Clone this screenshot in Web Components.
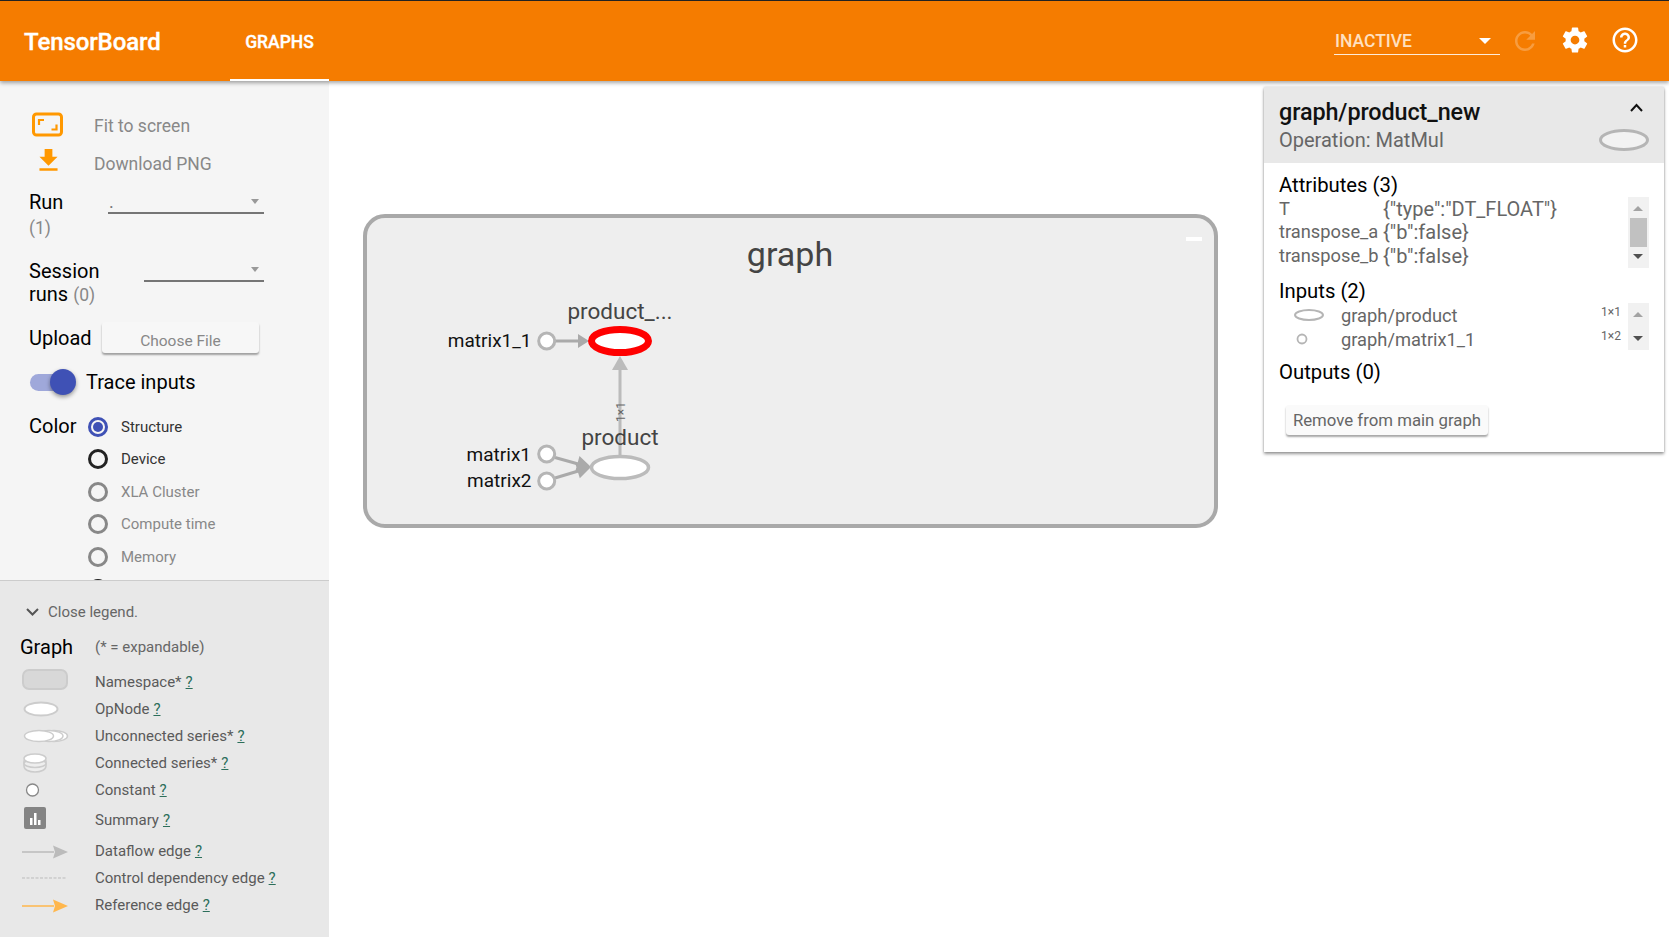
<!DOCTYPE html>
<html><head><meta charset="utf-8">
<style>
html,body{margin:0;padding:0;height:100%;overflow:hidden;background:#fff;font-family:Roboto,"Liberation Sans",sans-serif}
</style></head>
<body>
<tb-app></tb-app>
<script>
function def(name, html, proto){
  const t=document.createElement('template');t.innerHTML=html;
  customElements.define(name,class extends HTMLElement{
    constructor(){super();this.attachShadow({mode:'open'}).appendChild(t.content.cloneNode(true));}
    connectedCallback(){ if(proto) proto.call(this,this.shadowRoot); }
  });
}
const G="M19.43 12.98c.04-.32.07-.64.07-.98s-.03-.66-.07-.98l2.11-1.65c.19-.15.24-.42.12-.64l-2-3.46c-.12-.22-.39-.3-.61-.22l-2.49 1c-.52-.4-1.08-.73-1.69-.98l-.38-2.65C14.46 2.18 14.25 2 14 2h-4c-.25 0-.46.18-.49.42l-.38 2.65c-.61.25-1.17.59-1.69.98l-2.49-1c-.23-.09-.49 0-.61.22l-2 3.46c-.13.22-.07.49.12.64l2.11 1.65c-.04.32-.07.65-.07.98s.03.66.07.98l-2.11 1.65c-.19.15-.24.42-.12.64l2 3.46c.12.22.39.3.61.22l2.49-1c.52.4 1.08.73 1.69.98l.38 2.65c.03.24.24.42.49.42h4c.25 0 .46-.18.49-.42l.38-2.65c.61-.25 1.17-.59 1.69-.98l2.49 1c.23.09.49 0 .61-.22l2-3.46c.12-.22.07-.49-.12-.64l-2.01-1.65zM12 15.5c-1.93 0-3.5-1.57-3.5-3.5s1.57-3.5 3.5-3.5 3.5 1.57 3.5 3.5-1.57 3.5-3.5 3.5z";
const H="M11 18h2v-2h-2v2zm1-16C6.48 2 2 6.48 2 12s4.48 10 10 10 10-4.48 10-10S17.52 2 12 2zm0 18c-4.41 0-8-3.59-8-8s3.59-8 8-8 8 3.59 8 8-3.59 8-8 8zm0-14c-2.21 0-4 1.79-4 4h2c0-1.1.9-2 2-2s2 .9 2 2c0 2-3 1.75-3 5h2c0-2.25 3-2.5 3-5 0-2.21-1.79-4-4-4z";
const R="M17.65 6.35C16.2 4.9 14.21 4 12 4c-4.42 0-7.99 3.58-7.99 8s3.57 8 7.99 8c3.73 0 6.84-2.55 7.73-6h-2.08c-.82 2.33-3.04 4-5.65 4-3.31 0-6-2.69-6-6s2.69-6 6-6c1.66 0 3.14.69 4.22 1.78L13 11h7V4l-2.35 2.35z";

def('tb-header',`<style>
:host{display:flex;align-items:stretch;height:81px;box-sizing:border-box;border-top:1px solid #222;background:#f57c00;color:#fff;box-shadow:0 2px 4px rgba(0,0,0,.35);position:relative;z-index:3;padding-left:24px}
.brand{font-size:24px;font-weight:500;line-height:82px;width:206px;letter-spacing:-.1px;height:80px;-webkit-text-stroke:.35px #fff}
.tab{width:99px;box-sizing:border-box;text-align:center;font-size:17.500px;font-weight:500;line-height:82px;border-bottom:2px solid #fff;height:80px;overflow:hidden;-webkit-text-stroke:.35px #fff}
.sp{flex:1}
.right{display:flex;align-items:center;height:78px}
.sel{width:166px;height:30px;box-sizing:border-box;border-bottom:1px solid rgba(255,255,255,.85);display:flex;justify-content:space-between;align-items:center;padding:4px 9px 0 1px;font-size:17.500px;font-weight:500;color:#ffe0c0;margin-top:-1px}
.sel i{width:0;height:0;border-left:6px solid transparent;border-right:6px solid transparent;border-top:6px solid #fff}
svg{width:30px;height:30px;fill:#fff;display:block}
.r{margin-left:10px;opacity:.25;margin-top:2px}.g{margin-left:20px}.h{margin-left:20px;margin-right:29px}
</style>
<div class="brand">TensorBoard</div><div class="tab">GRAPHS</div><div class="sp"></div>
<div class="right"><div class="sel"><span>INACTIVE</span><i></i></div>
<svg class="r" viewBox="0 0 24 24"><path d="${R}"/></svg>
<svg class="g" viewBox="0 0 24 24"><path d="${G}"/></svg>
<svg class="h" viewBox="0 0 24 24"><path d="${H}"/></svg></div>`);

def('tb-action',`<style>
:host{display:flex;align-items:center;height:38px;font-size:17.500px;color:#888}
.i{width:62px;flex:none;display:flex}
</style><div class="i"><slot name="icon"></slot></div><slot></slot>`);

def('tb-select',`<style>
:host{display:block;position:relative;box-sizing:border-box;border-bottom:2px solid #757575;font-size:18px;color:#777}
i{position:absolute;right:5px;top:var(--at,11px);width:0;height:0;border-left:4.500px solid transparent;border-right:4.500px solid transparent;border-top:5px solid #999}
span{position:absolute;left:1px;top:2px;line-height:24px}
</style><span><slot></slot></span><i></i>`);

def('tb-toggle',`<style>
:host{display:flex;align-items:center;height:28px;font-size:20px;color:#000}
.w{position:relative;width:42px;height:17px;background:#9fa8da;border-radius:9px;margin:0 14px 0 1px;flex:none}
.w b{position:absolute;right:-4px;top:-4.500px;width:26px;height:26px;border-radius:50%;background:#3f51b5;box-shadow:0 2px 4px rgba(0,0,0,.4)}
</style><div class="w"><b></b></div><slot></slot>`);

def('tb-radio',`<style>
:host{display:flex;align-items:center;height:32.500px;font-size:15px;color:var(--c,#888)}
.o{width:20px;height:20px;border-radius:50%;box-sizing:border-box;border:3px solid var(--r,#888);margin-right:13px;margin-left:-1px;position:relative;flex:none}
:host([checked]) .o::after{content:"";position:absolute;left:2px;top:2px;width:10px;height:10px;border-radius:50%;background:#3f51b5}
</style><div class="o"></div><slot></slot>`);

def('tb-controls',`<style>
:host{display:block;flex:1;min-height:0;overflow:hidden;padding:26px 0 0 29px;background:#f5f5f5;box-sizing:border-box;font-size:20px;color:#000}
.act{margin-left:3px;display:block}
.fit{width:32px;height:26px;display:block;margin-top:-3px}
.dl{width:31px;height:31px;fill:#ff9800;margin-left:1px;display:block;margin-top:-7px}
.g{color:#888;font-size:17.500px}
.runrow{display:flex;height:28px;line-height:28px;margin-top:5px}
.l2{height:28px;line-height:28px;margin-top:-2px}
.sessrow{display:flex;margin-top:18px;line-height:23px}
.sessl{width:115px}
.up{display:flex;margin-top:15px;align-items:center;height:31px}
.up span{width:73px}
.cf{width:157px;height:31px;box-sizing:border-box;background:#f7f7f7;border-radius:3px;box-shadow:0 2px 2px rgba(0,0,0,.35);font-size:15.500px;color:#888;text-align:center;line-height:38px;overflow:hidden}
.tr{margin-top:15px}
.color{display:flex;margin-top:21px}
.color>span{width:60px;line-height:30px;margin-top:-6px}
.rads{margin-top:-6.500px}
</style>
<div class="act">
<tb-action><svg slot="icon" class="fit" viewBox="0 0 32 26"><rect x="1.500" y="2" width="28" height="21" rx="3" fill="none" stroke="#ff9800" stroke-width="3"/><path d="M12 8H7v5M19.500 17.500h5v-5" fill="none" stroke="#ff9800" stroke-width="2.200"/></svg>Fit to screen</tb-action>
<tb-action><svg slot="icon" class="dl" viewBox="0 0 24 24"><path d="M19 9h-4V3H9v6H5l7 7 7-7zM5 18v2h14v-2H5z"/></svg>Download PNG</tb-action>
</div>
<div class="runrow"><div style="width:79px">Run</div><tb-select style="width:156px;height:26px">.</tb-select></div>
<div class="l2 g">(1)</div>
<div class="sessrow"><div class="sessl">Session<br>runs <span class="g">(0)</span></div><tb-select style="width:120px;height:22px;--at:7px"></tb-select></div>
<div class="up"><span>Upload</span><div class="cf">Choose File</div></div>
<tb-toggle class="tr">Trace inputs</tb-toggle>
<div class="color"><span>Color</span><div class="rads">
<tb-radio checked style="--r:#3f51b5;--c:#333">Structure</tb-radio>
<tb-radio style="--r:#222;--c:#333">Device</tb-radio>
<tb-radio>XLA Cluster</tb-radio>
<tb-radio>Compute time</tb-radio>
<tb-radio>Memory</tb-radio>
<tb-radio style="--r:#222"></tb-radio>
</div></div>`);

def('tb-legend-row',`<style>
:host{display:flex;align-items:center;height:var(--h,27px);font-size:15px;color:#5a5a5a}
.i{width:75px;display:flex;flex:none}
u{color:#2c6e5a;margin-left:4px;text-decoration-thickness:1px}
</style><div class="i"><slot name="icon"></slot></div><slot></slot><u>?</u>`);

def('tb-legend',`<style>
:host{display:block;height:357px;box-sizing:border-box;background:#e8e8e8;border-top:1px solid #ccc;padding:0 0 0 20px;flex:none;color:#666;font-size:15px}
.c{display:flex;align-items:center;height:20px;margin:21px 0 0 5px}
.c svg{width:15px;height:10px;margin-right:8px}
.h{display:flex;align-items:center;height:28px;margin-top:11px;margin-bottom:7px}
.h b{font-weight:400;font-size:20px;color:#000;width:75px}
svg{display:block}
</style>
<div class="c"><svg viewBox="0 0 15 10"><path d="M2 2l5.500 5.500L13 2" fill="none" stroke="#555" stroke-width="2"/></svg>Close legend.</div>
<div class="h"><b>Graph</b><span>(* = expandable)</span></div>
<tb-legend-row><svg slot="icon" width="50" height="22" style="margin-top:-4px"><rect x="3" y="1" width="44" height="19" rx="6" fill="#d8d8d8" stroke="#ccc" stroke-width="2"/></svg>Namespace*</tb-legend-row>
<tb-legend-row><svg slot="icon" width="50" height="18"><ellipse cx="21" cy="9" rx="16.500" ry="6.500" fill="#fff" stroke="#ccc" stroke-width="2"/></svg>OpNode</tb-legend-row>
<tb-legend-row><svg slot="icon" width="50" height="16"><ellipse cx="34" cy="8" rx="13.500" ry="5.500" fill="#fff" stroke="#ccc" stroke-width="1.500"/><ellipse cx="29" cy="8" rx="14" ry="5.500" fill="#fff" stroke="#ccc" stroke-width="1.500"/><ellipse cx="19" cy="8" rx="14.500" ry="5.500" fill="#fff" stroke="#ccc" stroke-width="1.500"/></svg>Unconnected series*</tb-legend-row>
<tb-legend-row><svg slot="icon" width="50" height="22"><path d="M4 14c0 8 22 8 22 0v-5H4z" fill="#eee" stroke="#ccc" stroke-width="1.500"/><ellipse cx="15" cy="11.500" rx="11" ry="4" fill="#eee" stroke="#ccc" stroke-width="1.500"/><ellipse cx="15" cy="6.500" rx="11" ry="4.500" fill="#fff" stroke="#ccc" stroke-width="1.500"/></svg>Connected series*</tb-legend-row>
<tb-legend-row><svg slot="icon" width="50" height="16"><circle cx="12.500" cy="8" r="6" fill="#fff" stroke="#888" stroke-width="1.300"/></svg>Constant</tb-legend-row>
<tb-legend-row style="--h:34px"><svg slot="icon" width="50" height="24" style="margin-top:-5px"><rect x="4" y="1" width="22" height="22" rx="2" fill="#848484"/><path d="M10 12h2.500v7H10zM14 7h2.500v12H14zM18 14h2.500v5H18z" fill="#fff"/></svg>Summary</tb-legend-row>
<tb-legend-row><svg slot="icon" width="50" height="14" style="margin-top:2px"><path d="M2 7h32" stroke="#bbb" stroke-width="1.500"/><path d="M48 7L33 .5l2 6.500-2 6.500z" fill="#bbb"/></svg>Dataflow edge</tb-legend-row>
<tb-legend-row><svg slot="icon" width="50" height="6"><path d="M2 3h45" stroke="#bbb" stroke-width="1" stroke-dasharray="3 1.500"/></svg>Control dependency edge</tb-legend-row>
<tb-legend-row><svg slot="icon" width="50" height="14" style="margin-top:2px"><path d="M2 7h32" stroke="#ffb74d" stroke-width="1.500"/><path d="M48 7L33 .5l2 6.500-2 6.500z" fill="#ffb74d"/></svg>Reference edge</tb-legend-row>`);

def('tb-sidebar',`<style>
:host{display:flex;flex-direction:column;width:329px;flex:none;min-height:0;position:relative;z-index:1}
</style><tb-controls></tb-controls><tb-legend></tb-legend>`);

def('tb-graph',`<style>
:host{display:block;position:absolute;left:0;top:0;width:100%;height:100%}
svg{display:block;width:100%;height:100%;font-family:Roboto,"Liberation Sans",sans-serif}
text{fill:#333}
.lab{fill:#111;font-size:19px;text-anchor:end}
.t{fill:#444;font-size:22.500px;text-anchor:middle}
</style>
<svg viewBox="329 81 1340 856">
<rect x="365" y="216" width="851" height="310" rx="20" fill="#eee" stroke="#a9a9a9" stroke-width="4"/>
<rect x="1186" y="237" width="16" height="4" fill="#fff" />
<text x="790" y="266" style="fill:#444;font-size:34px;text-anchor:middle">graph</text>
<path d="M620 455V368" stroke="#bbb" stroke-width="3" fill="none"/>
<path d="M620 356l-8 14h16z" fill="#bbb"/>
<text transform="translate(624.500,412) rotate(-90)" style="fill:#666;font-size:12px;text-anchor:middle">1×1</text>
<path d="M555 341h26" stroke="#aaa" stroke-width="3"/><path d="M589 341l-11-7v14z" fill="#aaa"/>
<path d="M555 457.500l25 7M555 478l25-7.500" stroke="#aaa" stroke-width="3"/>
<path d="M591 467L575.500 470.400 579.500 456zM591 467L579.800 478.200 575.400 463.800z" fill="#aaa"/>
<circle cx="546.700" cy="341" r="8" fill="#fff" stroke="#b5b5b5" stroke-width="3"/>
<circle cx="546.700" cy="454" r="8" fill="#fff" stroke="#b5b5b5" stroke-width="3"/>
<circle cx="546.700" cy="481" r="8" fill="#fff" stroke="#b5b5b5" stroke-width="3"/>
<ellipse cx="620" cy="341" rx="28.500" ry="11.500" fill="#fff" stroke="#f00" stroke-width="7"/>
<ellipse cx="620" cy="467.500" rx="28.500" ry="11" fill="#fff" stroke="#bbb" stroke-width="3.500"/>
<text class="t" x="620" y="319">product_...</text>
<text class="t" x="620" y="445">product</text>
<text class="lab" x="531.500" y="347">matrix1_1</text>
<text class="lab" x="531" y="461">matrix1</text>
<text class="lab" x="531.500" y="487">matrix2</text>
</svg>`);

def('tb-scroll',`<style>
:host{display:block;position:relative;width:21px;background:#f1f1f1;flex:none}
i{position:absolute;left:5px;width:0;height:0;border-left:5px solid transparent;border-right:5px solid transparent}
.u{top:9px;border-bottom:5px solid #a3a3a3}.d{bottom:9px;border-top:5px solid #505050}
b{position:absolute;left:2px;right:2px;top:var(--t,21px);height:var(--n,0);background:#c1c1c1}
</style><i class="u"></i><b></b><i class="d"></i>`);

def('tb-info-card',`<style>
:host{display:block;position:absolute;top:6px;right:5px;width:400px;height:365px;background:#fff;box-shadow:0 2px 3px rgba(0,0,0,.4),0 0 2px rgba(0,0,0,.15);box-sizing:border-box;color:#666;z-index:2}
.hd{height:76px;background:#e8e8e8;position:relative;padding:13px 0 0 15px;box-sizing:border-box}
.title{font-size:23.400px;line-height:24px;color:#111;font-weight:500;letter-spacing:-.1px}
.op{font-size:20px;line-height:26px;color:#666;margin-top:3px}
.chev{position:absolute;right:21px;top:16px;width:13px;height:9px}
.oval{position:absolute;right:15px;top:41px;width:50px;height:24px}
.bd{padding:10px 15px 0 15px;font-size:20px}
h4{margin:0;font-weight:400;font-size:20.300px;color:#000;line-height:24px}
.tbl{display:flex;justify-content:space-between;height:71px;margin-top:0}
.attr{display:grid;grid-template-columns:104px auto;grid-auto-rows:23.400px;line-height:24px;font-size:20px;align-content:start}
.k{font-size:18.300px}
.ins{display:flex;height:47px;margin-top:0;justify-content:space-between}
.rows{flex:1;display:grid;grid-template-columns:62px 1fr auto;grid-auto-rows:24px;line-height:24px;font-size:18.300px;margin-top:1px;margin-right:5px}
.rows svg{display:block;margin-top:4px}
.sz{font-size:12px;line-height:16px;color:#666;margin-right:2px}
.btn{width:202px;height:30px;background:#fafafa;border-radius:3px;box-shadow:0 2px 2px rgba(0,0,0,.35);margin:21px 0 0 7px;text-align:center;line-height:30px;font-size:16.800px;color:#666}
</style>
<div class="hd"><div class="title">graph/product_new</div><div class="op">Operation: MatMul</div>
<svg class="chev" viewBox="0 0 13 9"><path d="M1 8l5.500-6L12 8" fill="none" stroke="#111" stroke-width="2"/></svg>
<svg class="oval" viewBox="0 0 50 24"><ellipse cx="25" cy="12" rx="23.500" ry="9.500" fill="#f2f2f2" stroke="#b5b5b5" stroke-width="3"/></svg></div>
<div class="bd">
<h4>Attributes (3)</h4>
<div class="tbl"><div class="attr"><span class="k">T</span><span>{"type":"DT_FLOAT"}</span><span class="k">transpose_a</span><span>{"b":false}</span><span class="k">transpose_b</span><span>{"b":false}</span></div><tb-scroll style="--n:29px"></tb-scroll></div>
<h4 style="margin-top:11px">Inputs (2)</h4>
<div class="ins"><div class="rows">
<svg width="34" height="16" style="margin-left:15px"><ellipse cx="15" cy="7" rx="14" ry="5" fill="#fff" stroke="#b5b5b5" stroke-width="2"/></svg><span>graph/product</span><span class="sz">1×1</span>
<svg width="34" height="16" style="margin-left:15px"><circle cx="8" cy="7" r="4.500" fill="#fff" stroke="#b5b5b5" stroke-width="1.800"/></svg><span>graph/matrix1_1</span><span class="sz">1×2</span>
</div><tb-scroll style="--n:0"></tb-scroll></div>
<h4 style="margin-top:10px">Outputs (0)</h4>
<div class="btn">Remove from main graph</div>
</div>`);

def('tb-main',`<style>
:host{display:block;flex:1;position:relative;min-width:0;background:#fff}
</style><tb-graph></tb-graph><tb-info-card></tb-info-card>`);

def('tb-app',`<style>
:host{display:flex;flex-direction:column;width:1669px;height:937px;overflow:hidden}
.b{display:flex;flex:1;min-height:0}
</style><tb-header></tb-header><div class="b"><tb-sidebar></tb-sidebar><tb-main></tb-main></div>`);
</script>
</body></html>
